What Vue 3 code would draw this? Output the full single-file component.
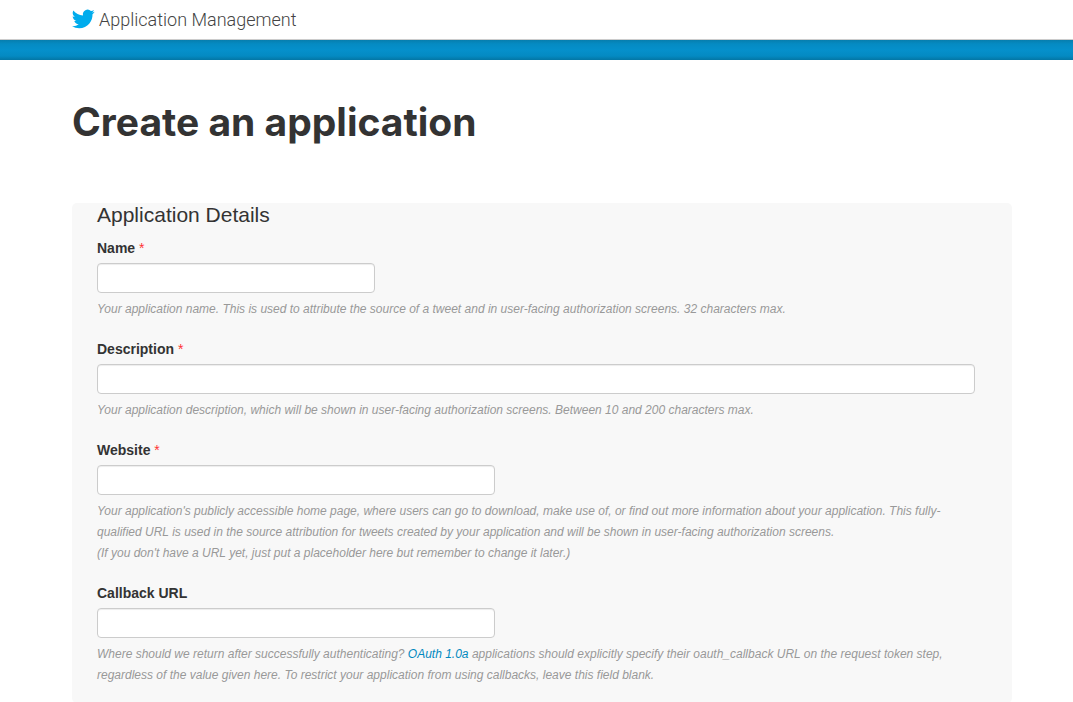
<script setup>
import { reactive } from 'vue'

const form = reactive({ name: '', description: '', website: '', callback: '' })
</script>

<template>
  <div class="page">
    <header class="masthead">
      <a class="brand" href="#">
        <svg class="bird" viewBox="0 1 24 20" aria-hidden="true">
          <path d="M23.6 2.4c-.9.4-1.8.6-2.8.8 1-.6 1.8-1.5 2.1-2.7-.9.6-2 1-3.1 1.2A4.9 4.9 0 0 0 11.5 6.200C7.400 6 3.800 4 1.400 1.100c-1.300 2.200-.7 5.100 1.500 6.500-.8 0-1.500-.2-2.200-.6 0 2.300 1.600 4.400 3.900 4.900-.7.2-1.500.2-2.200.1.600 1.900 2.400 3.400 4.600 3.400A9.900 9.900 0 0 1 0 17.400a13.900 13.900 0 0 0 7.500 2.200c9.100 0 14.200-7.700 13.900-14.600 1-.7 1.800-1.600 2.200-2.600z" />
        </svg>
        <span>Application Management</span>
      </a>
    </header>
    <div class="band"></div>

    <main class="content">
      <h1>Create an application</h1>

      <form class="panel" @submit.prevent>
        <h2>Application Details</h2>

        <div class="field">
          <label for="name">Name <span class="required">*</span></label>
          <input id="name" v-model="form.name" class="short" type="text" maxlength="32" required />
          <p>Your application name. This is used to attribute the source of a tweet and in user-facing authorization screens. 32 characters max.</p>
        </div>

        <div class="field">
          <label for="description">Description <span class="required">*</span></label>
          <input id="description" v-model="form.description" class="full" type="text" maxlength="200" required />
          <p>Your application description, which will be shown in user-facing authorization screens. Between 10 and 200 characters max.</p>
        </div>

        <div class="field">
          <label for="website">Website <span class="required">*</span></label>
          <input id="website" v-model="form.website" class="medium" type="text" required />
          <p>
            Your application's publicly accessible home page, where users can go to download, make use of, or find out more information about your application. This fully-qualified URL is used in the source attribution for tweets created by your application and will be shown in user-facing authorization screens.<br />
            (If you don't have a URL yet, just put a placeholder here but remember to change it later.)
          </p>
        </div>

        <div class="field">
          <label for="callback">Callback URL</label>
          <input id="callback" v-model="form.callback" class="medium" type="text" />
          <p>
            Where should we return after successfully authenticating? <a href="#">OAuth 1.0a</a> applications should explicitly specify their oauth_callback URL on the request token step, regardless of the value given here. To restrict your application from using callbacks, leave this field blank.
          </p>
        </div>
      </form>
    </main>
  </div>
</template>

<style>
body {
  background: #fff;
}
</style>

<style scoped>
.page {
  color: #333;
  font-family: "Liberation Sans", Arial, sans-serif;
  font-size: 14px;
  line-height: 20px;
}

.masthead {
  display: flex;
  align-items: center;
  height: 39px;
  padding: 0 61px 0 72px;
  border-bottom: 1px solid #ccc;
}

.brand {
  display: flex;
  align-items: center;
  gap: 4px;
  color: #444;
  font-family: Roboto, sans-serif;
  font-size: 18px;
  font-weight: 300;
  text-decoration: none;
}

.bird {
  width: 23px;
  height: 20px;
  overflow: visible;
  fill: #00aced;
}

.band {
  height: 20px;
  background: linear-gradient(#077eae, #058bc3 20%, #0590cb 50%, #048ac2 80%, #0376a5);
}

.content {
  padding: 0 61px 0 72px;
}

h1 {
  margin: 0;
  padding: 37px 0 56px;
  font-family: Inter, sans-serif;
  font-size: 39px;
  font-weight: 700;
  line-height: 50px;
}

.panel {
  padding: 0 37px 17px 25px;
  border-radius: 5px;
  background: #f8f8f8;
}

h2 {
  margin: 0;
  font-size: 21px;
  font-weight: 400;
  line-height: 24px;
}

.field {
  padding-top: 11px;
  margin-bottom: 8px;
}

.field:last-child {
  margin-bottom: 0;
}

label {
  display: block;
  font-weight: 700;
}

.required {
  color: #f33;
  font-weight: 400;
}

input {
  display: block;
  box-sizing: border-box;
  height: 30px;
  margin: 5px 0 6px;
  padding: 4px 6px;
  border: 1px solid #ccc;
  border-radius: 4px;
  background: #fff;
  box-shadow: inset 0 1px 1px rgba(0, 0, 0, 0.075);
  color: #555;
  font: inherit;
}

.short {
  width: 278px;
}

.medium {
  width: 398px;
}

.full {
  width: 100%;
}

p {
  margin: 0;
  color: #999;
  font-size: 12px;
  font-style: italic;
  line-height: 21px;
}

p a {
  color: #0088bf;
  text-decoration: none;
}
</style>
